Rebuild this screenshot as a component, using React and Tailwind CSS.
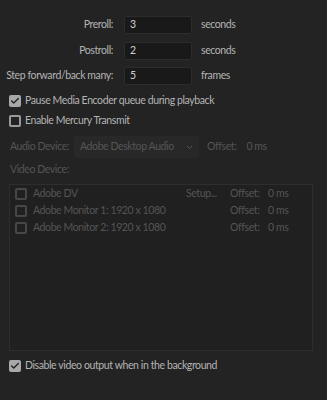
import { Check } from 'lucide-react';

function Box({ checked, disabled }) {
    if (checked) {
        return (
            <span className="w-[12px] h-[12px] rounded-[2px] bg-[#a8a8a8] flex items-center justify-center shrink-0">
                <Check className="w-[10px] h-[10px] text-[#262626]" strokeWidth={3.5} />
            </span>
        );
    }
    return (
        <span className={`w-[12px] h-[12px] rounded-[2px] border-2 shrink-0 ${disabled ? 'border-[#474747]' : 'border-[#9a9a9a]'}`} />
    );
}

function Field({ label, value, unit }) {
    return (
        <div className="flex items-center h-[18px]">
            <span className="w-[114px] text-right pr-[1px]">{label}</span>
            <div className="ml-[10px] w-[68px] h-[18px] bg-[#191919] border border-[#2c2c2c] rounded-[2px] px-[5px] flex items-center text-[#d0d0d0]">
                {value}
            </div>
            <span className="ml-[9px]">{unit}</span>
        </div>
    );
}

const devices = [
    { name: 'Adobe DV', setup: true },
    { name: 'Adobe Monitor 1: 1920 x 1080' },
    { name: 'Adobe Monitor 2: 1920 x 1080' },
];

export default function App() {
    return (
        <div className="w-[327px] h-[400px] bg-[#232323] text-[#b4b4b4] text-[10.5px] tracking-[-0.4px] whitespace-nowrap overflow-hidden" style={{ fontFamily: 'Lato, "Open Sans", sans-serif' }}>
            <div className="pt-[16px] flex flex-col gap-[7.5px]">
                <Field label="Preroll:" value="3" unit="seconds" />
                <Field label="Postroll:" value="2" unit="seconds" />
                <Field label="Step forward/back many:" value="5" unit="frames" />
            </div>

            <div className="px-[9px] mt-[9px] flex flex-col gap-[7px]">
                <label className="flex items-center gap-[4px] h-[13px]">
                    <Box checked />
                    <span>Pause Media Encoder queue during playback</span>
                </label>
                <label className="flex items-center gap-[4px] h-[13px]">
                    <Box />
                    <span>Enable Mercury Transmit</span>
                </label>
            </div>

            <div className="px-[10px] mt-[9px] text-[#555555]">
                <div className="flex items-center h-[22px]">
                    <span className="w-[64px]">Audio Device:</span>
                    <div className="w-[125px] h-[22px] bg-[#282828] rounded-[2px] px-[6px] flex items-center justify-between">
                        <span>Adobe Desktop Audio</span>
                        <svg width="7" height="5" viewBox="0 0 7 5" fill="none">
                            <path d="M1 1l2.5 2.5L6 1" stroke="#555" strokeWidth="1" />
                        </svg>
                    </div>
                    <span className="ml-[8px]">Offset:</span>
                    <span className="ml-[10px]">0 ms</span>
                </div>
                <div className="mt-[5px] h-[14px] flex items-center">Video Device:</div>
            </div>

            <div className="mx-[9px] mt-[7px] h-[167px] w-[304px] border border-[#2e2e2e] bg-[#202020]">
                {devices.map((d) => (
                    <div key={d.name} className="flex items-center h-[17px] pl-[5px] text-[#555555]">
                        <Box disabled />
                        <span className="ml-[6px] w-[153px]">{d.name}</span>
                        <span className="w-[44px]">{d.setup ? 'Setup...' : ''}</span>
                        <span className="w-[38px]">Offset:</span>
                        <span>0 ms</span>
                    </div>
                ))}
            </div>

            <label className="px-[9px] mt-[8px] flex items-center gap-[4px] h-[13px]">
                <Box checked />
                <span>Disable video output when in the background</span>
            </label>
        </div>
    );
}
